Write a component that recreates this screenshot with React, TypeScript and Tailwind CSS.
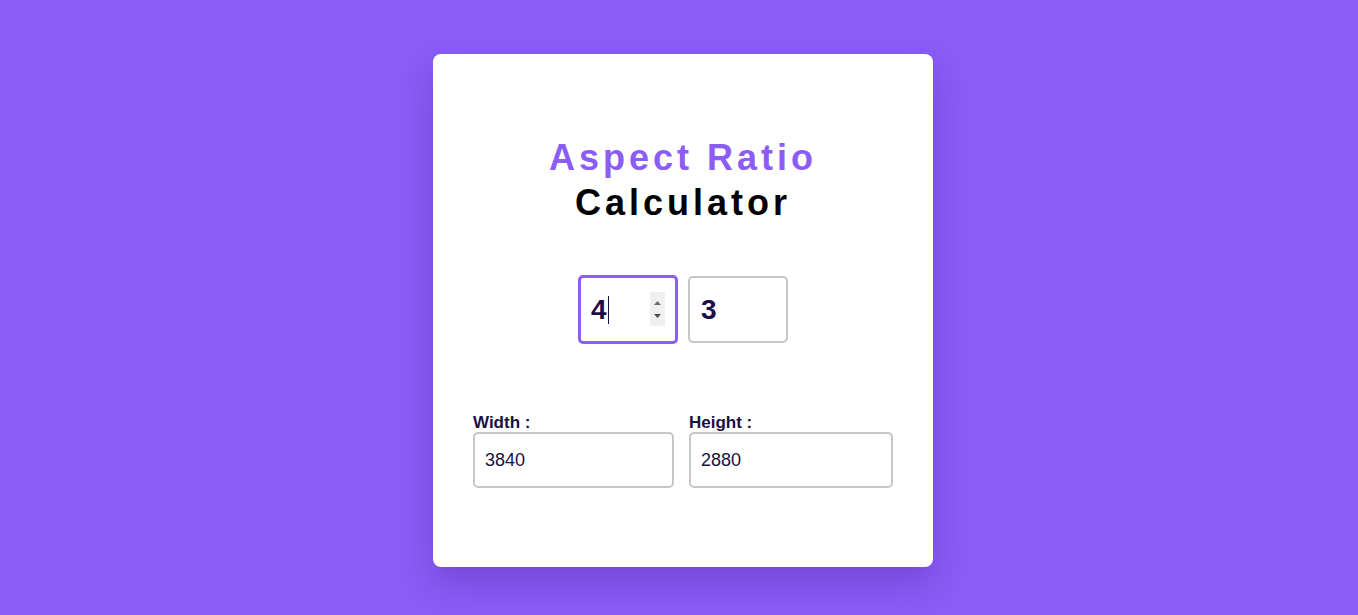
import { useState } from 'react'

const font = { fontFamily: '"Liberation Sans", Arial, sans-serif' }

export default function App() {
  const [width, setWidth] = useState('3840')
  const [height, setHeight] = useState('2880')

  return (
    <div className="min-h-screen bg-[#8b5cf6] flex justify-center pt-[54px] pl-[8px]" style={font}>
      <div className="w-[500px] h-[513px] bg-white rounded-[8px] shadow-[0_16px_32px_rgba(40,0,110,0.22)] px-10 pt-[81px] pb-[79px] flex flex-col">
        {/* Title */}
        <h1 className="text-center text-[36px] leading-[45px] font-bold tracking-[4px]">
          <span className="block text-[#8b5cf6]">Aspect Ratio</span>
          <span className="block text-black">Calculator</span>
        </h1>

        {/* Ratio inputs */}
        <div className="mt-[50px] flex justify-center items-center gap-[10px]">
          <div className="relative w-[100px] h-[69px] border-[3px] border-[#8b5cf6] rounded-[5px] flex items-center pl-[10px]">
            <span className="text-[28px] font-bold text-[#1b0f45] leading-none">4</span>
            <span className="w-px h-[28px] bg-[#1b0f45] ml-px" />
            <div className="absolute left-[69px] top-[14px] w-[15px] h-[34px] bg-[#f0f0f0] flex flex-col items-center justify-center gap-[9px]">
              <svg width="7" height="4" viewBox="0 0 7 4"><path d="M3.5 0L7 4H0z" fill="#6b6b6b" /></svg>
              <svg width="7" height="4" viewBox="0 0 7 4"><path d="M0 0h7L3.5 4z" fill="#4b4b4b" /></svg>
            </div>
          </div>
          <div className="w-[100px] h-[67px] border-2 border-[#c3c6cb] rounded-[5px] flex items-center pl-[11px]">
            <span className="text-[28px] font-bold text-[#1b0f45] leading-none">3</span>
          </div>
        </div>

        {/* Dimensions */}
        <div className="mt-[70px] flex gap-[15px]">
          <label className="flex flex-col w-[201px]">
            <span className="text-[17px] leading-[18px] font-bold text-[#1b0f45]">Width :</span>
            <input
              value={width}
              onChange={e => setWidth(e.target.value)}
              className="h-[56px] w-full border-2 border-[#c3c6cb] rounded-[5px] px-[10px] text-[18px] text-[#1b0f45] outline-none"
              style={font}
            />
          </label>
          <label className="flex flex-col w-[204px]">
            <span className="text-[17px] leading-[18px] font-bold text-[#1b0f45]">Height :</span>
            <input
              value={height}
              onChange={e => setHeight(e.target.value)}
              className="h-[56px] w-full border-2 border-[#c3c6cb] rounded-[5px] px-[10px] text-[18px] text-[#1b0f45] outline-none"
              style={font}
            />
          </label>
        </div>
      </div>
    </div>
  )
}
